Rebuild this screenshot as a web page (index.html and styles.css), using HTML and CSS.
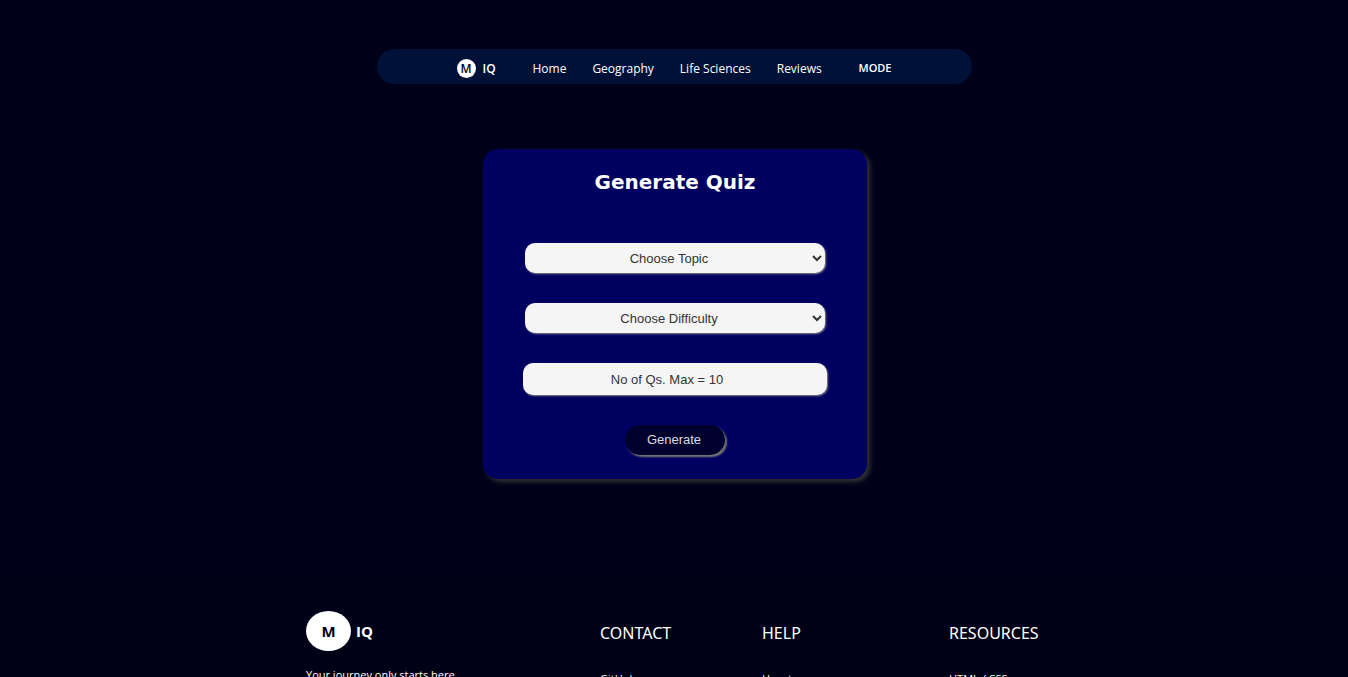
FILE: index.html
```html
<!DOCTYPE html>
<html lang="en">
<head>
<meta charset="utf-8">
<meta name="viewport" content="width=device-width, initial-scale=1">
<title>MIQ</title>
<link rel="stylesheet" href="styles.css">
</head>
<body>
<header class="header">
  <nav class="nav">
    <a class="logo" href="#"><span class="logo-mark">M</span>IQ</a>
    <div class="nav-links">
      <a href="#">Home</a>
      <a href="#">Geography</a>
      <a href="#">Life Sciences</a>
      <a href="#">Reviews</a>
    </div>
    <button class="mode" type="button">MODE</button>
  </nav>
</header>
<main class="main">
  <form class="quiz">
    <h1 class="quiz-title">Generate Quiz</h1>
    <select class="field" aria-label="Topic"><option>Choose Topic</option></select>
    <select class="field" aria-label="Difficulty"><option>Choose Difficulty</option></select>
    <input class="field field-number" type="text" inputmode="numeric" aria-label="Number of questions" placeholder="No of Qs. Max = 10">
    <button class="generate" type="button">Generate</button>
  </form>
</main>
<footer class="footer">
  <div class="footer-grid">
    <div>
      <a class="brand" href="#"><span class="brand-mark">M</span>IQ</a>
      <p class="tagline">Your journey only starts here</p>
    </div>
    <div class="column">
      <h2>CONTACT</h2>
      <a href="#">GitHub</a>
    </div>
    <div class="column">
      <h2>HELP</h2>
      <a href="#">How to</a>
    </div>
    <div class="column">
      <h2>RESOURCES</h2>
      <a href="#">HTML / CSS</a>
    </div>
  </div>
</footer>
</body>
</html>
```
FILE: styles.css
```css
* {
  box-sizing: border-box;
}

body {
  display: flex;
  flex-direction: column;
  height: 100vh;
  margin: 0;
  overflow: hidden;
  background: #00001a;
  color: #fff;
  font-family: "Segoe UI", "Open Sans", "Noto Sans", sans-serif;
  font-size: 12px;
  line-height: 16px;
}

a {
  color: inherit;
  text-decoration: none;
}

.header {
  flex: none;
  padding: 49px 16px 0;
}

.nav {
  display: flex;
  align-items: center;
  justify-content: space-between;
  max-width: 595px;
  min-height: 35px;
  margin: 0 auto;
  padding: 4px 80px 0;
  border-radius: 20px;
  background: #001138;
}

.logo {
  display: flex;
  align-items: center;
  gap: 7px;
  font-weight: 600;
}

.logo-mark {
  width: 19px;
  height: 19px;
  border-radius: 50%;
  background: #fff;
  color: #00001a;
  line-height: 19px;
  text-align: center;
}

.nav-links {
  display: flex;
  gap: 26px;
}

.mode {
  padding: 0 0 2px;
  border: 0;
  background: none;
  color: #fff;
  font: 600 11px/16px "Segoe UI", "Open Sans", "Noto Sans", sans-serif;
}

.main {
  flex: none;
  padding: 65px 16px 98px 18px;
}

.quiz {
  display: flex;
  flex-direction: column;
  align-items: center;
  gap: 30px;
  max-width: 384px;
  margin: 0 auto;
  padding: 21px 40px 24px;
  border-radius: 15px;
  background: #000060;
  box-shadow: 3px 3px 5px #333;
}

.quiz-title {
  margin: 0 0 18px;
  font: bold 20px/25px Verdana, "DejaVu Sans", sans-serif;
}

.field {
  width: 100%;
  max-width: 300px;
  height: 30px;
  border: 0;
  border-radius: 10px;
  background-color: #f5f5f5;
  box-shadow: 1px 1px 2px #888;
  color: #333;
  font: 13px/16px Arial, "Liberation Sans", sans-serif;
  text-align: center;
}

.field-number {
  max-width: 304px;
  height: 32px;
  padding: 0 16px 0 0;
}

.field-number::placeholder {
  color: #333;
}

.generate {
  width: 100px;
  height: 30px;
  padding: 0 2px 0 0;
  border: 0;
  border-radius: 15px;
  background: #00002e;
  box-shadow: 2px 2px 2px #777;
  color: #ddd;
  font: 13px/16px Arial, "Liberation Sans", sans-serif;
}

.footer {
  flex: none;
  padding: 34px 16px 40px;
  background: #000016;
}

.footer-grid {
  display: grid;
  grid-template-columns: 294fr 162fr 187fr 93fr;
  max-width: 736px;
  margin: 0 auto;
}

.brand {
  display: flex;
  align-items: center;
  gap: 5px;
  font-size: 15px;
  font-weight: bold;
}

.brand-mark {
  width: 45px;
  height: 40px;
  border-radius: 50%;
  background: #fff;
  color: #000016;
  line-height: 40px;
  text-align: center;
}

.tagline {
  margin: 16px 0 0;
  font-size: 11px;
}

.column {
  font-size: 11px;
}

.column h2 {
  margin: 12px 0 28px;
  font: 16px/20px Tahoma, "Noto Sans", sans-serif;
}
```
